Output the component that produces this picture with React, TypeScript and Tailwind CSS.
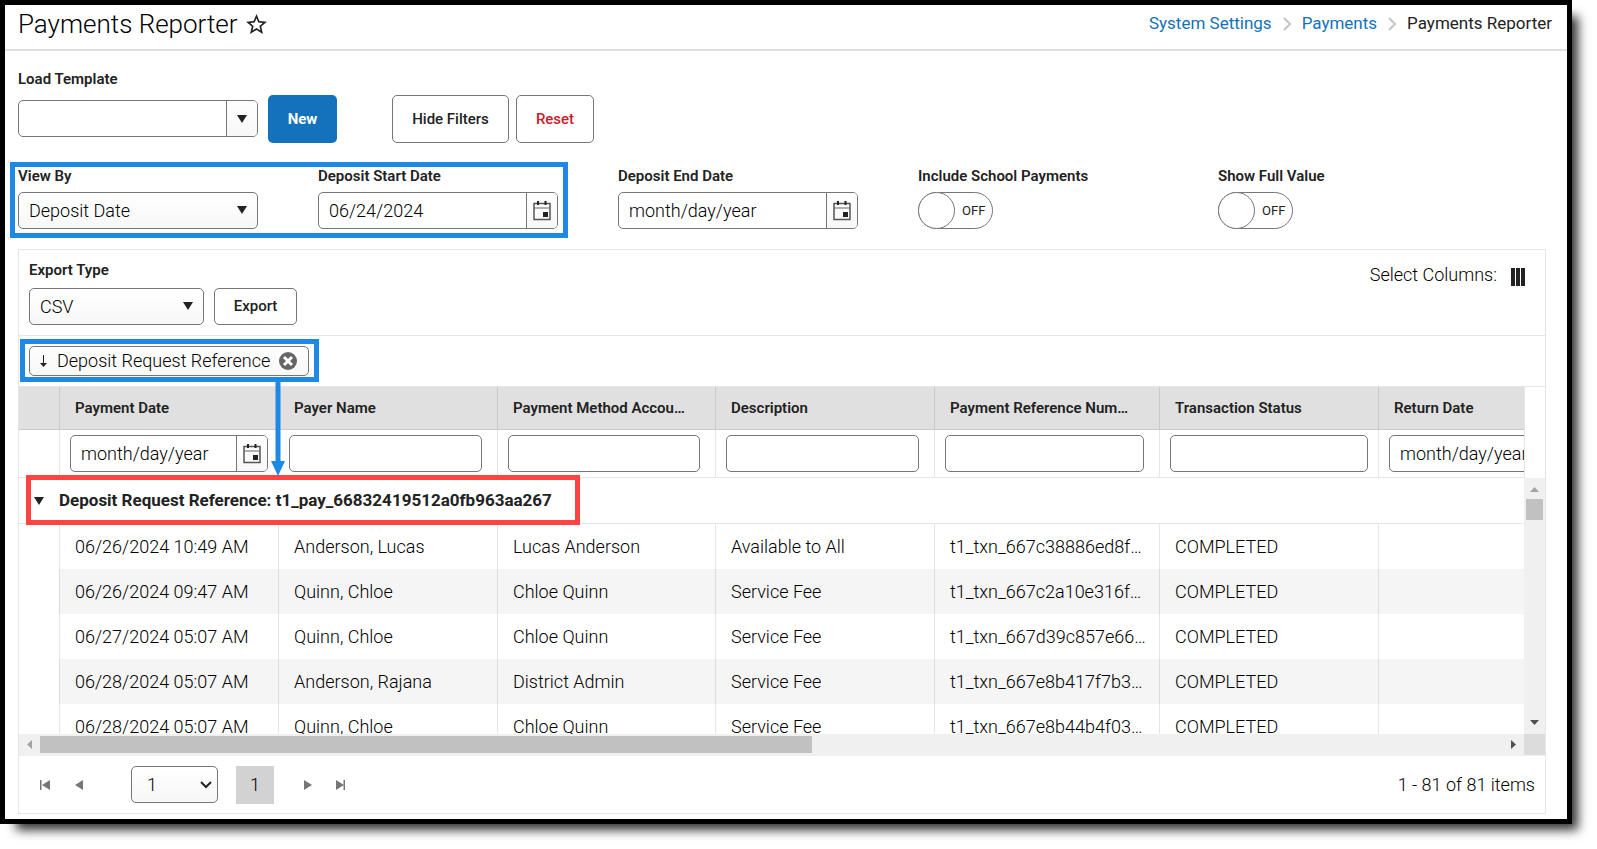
import React from 'react';
import { MdStarBorder } from 'react-icons/md';

interface Payment {
  date: string;
  payer: string;
  account: string;
  description: string;
  reference: string;
  status: string;
}

const payments: Payment[] = [
  { date: '06/26/2024 10:49 AM', payer: 'Anderson, Lucas', account: 'Lucas Anderson', description: 'Available to All', reference: 't1_txn_667c38886ed8f…', status: 'COMPLETED' },
  { date: '06/26/2024 09:47 AM', payer: 'Quinn, Chloe', account: 'Chloe Quinn', description: 'Service Fee', reference: 't1_txn_667c2a10e316f…', status: 'COMPLETED' },
  { date: '06/27/2024 05:07 AM', payer: 'Quinn, Chloe', account: 'Chloe Quinn', description: 'Service Fee', reference: 't1_txn_667d39c857e66…', status: 'COMPLETED' },
  { date: '06/28/2024 05:07 AM', payer: 'Anderson, Rajana', account: 'District Admin', description: 'Service Fee', reference: 't1_txn_667e8b417f7b3…', status: 'COMPLETED' },
  { date: '06/28/2024 05:07 AM', payer: 'Quinn, Chloe', account: 'Chloe Quinn', description: 'Service Fee', reference: 't1_txn_667e8b44b4f03…', status: 'COMPLETED' },
];

const columns = [
  { title: 'Payment Date', date: true, pad: 'pr-[10px]' },
  { title: 'Payer Name', date: false, pad: 'pr-[15px]' },
  { title: 'Payment Method Accou…', date: false, pad: 'pr-[15px]' },
  { title: 'Description', date: false, pad: 'pr-[15px]' },
  { title: 'Payment Reference Num…', date: false, pad: 'pr-[15px]' },
  { title: 'Transaction Status', date: false, pad: 'pr-[10px]' },
  { title: 'Return Date', date: true, pad: 'pr-[10px]' },
];

const labelClass = 'block text-[15px] leading-5 font-semibold';
const boxClass = 'h-[37px] rounded-[5px] border border-[#767676] bg-white';
const buttonClass = 'rounded-[5px] border border-[#767676] bg-white text-[15px] font-medium';

function Caret({ className = '' }: { className?: string }) {
  return (
    <svg width="10" height="8" viewBox="0 0 10 8" className={className} aria-hidden="true">
      <path d="M0 0h10L5 8z" fill="#222" />
    </svg>
  );
}

function CalendarIcon() {
  return (
    <svg width="18" height="20" viewBox="0 0 18 20" fill="none" aria-hidden="true">
      <path d="M1 2.500h16v16h-16z" stroke="#555" strokeWidth="1.500" />
      <path d="M1 7h16" stroke="#666" strokeWidth="1.200" />
      <path d="M5 0v4M12.500 0v4" stroke="#222" strokeWidth="2" />
      <path d="M10 11h5v5h-5z" fill="#222" />
    </svg>
  );
}

function DateBox({ id, value, label }: { id: string; value?: string; label?: string }) {
  return (
    <div className={`${boxClass} flex overflow-hidden`}>
      <input
        id={id}
        aria-label={label}
        defaultValue={value}
        placeholder="month/day/year"
        className="min-w-0 flex-1 pl-[10px] text-[18px] font-light text-black outline-none placeholder:text-black"
      />
      <button
        aria-label="Open calendar"
        className="flex w-[31px] items-center justify-center border-l border-[#767676] bg-linear-to-b from-white to-[#f7f7f7]"
      >
        <CalendarIcon />
      </button>
    </div>
  );
}

function SelectBox({ id, value }: { id: string; value: string }) {
  return (
    <div className="relative">
      <select
        id={id}
        className={`${boxClass} w-full appearance-none bg-linear-to-b from-white to-[#f7f7f7] pl-[10px] text-[18px] font-light text-black`}
      >
        <option>{value}</option>
      </select>
      <Caret className="pointer-events-none absolute top-[14px] right-[11px]" />
    </div>
  );
}

function Toggle({ id, label }: { id: string; label: string }) {
  return (
    <div className="w-[300px]">
      <label htmlFor={id} className={`${labelClass} mb-[6px]`}>{label}</label>
      <div className="relative flex h-[37px] w-[75px] items-center rounded-full border border-[#767676] text-[13px]">
        <input
          id={id}
          type="checkbox"
          role="switch"
          className="-ml-px size-[37px] appearance-none rounded-full border border-[#767676] bg-white"
        />
        <span className="ml-[7px]">OFF</span>
      </div>
    </div>
  );
}

function GridColumns() {
  return (
    <colgroup>
      <col className="w-[40px]" />
      <col className="w-[219px]" />
      <col className="w-[219px]" />
      <col className="w-[218px]" />
      <col className="w-[219px]" />
      <col className="w-[225px]" />
      <col className="w-[219px]" />
      <col className="w-[219px]" />
    </colgroup>
  );
}

function GridHeader() {
  return (
    <div className="mr-[20px] overflow-hidden border-r border-[#e6e6e6]">
      <table className="w-[1578px] table-fixed border-separate border-spacing-0">
        <GridColumns />
        <thead>
          <tr className="h-[43px] bg-[#e0e0e0] text-left text-[15px]">
            <th className="border-b border-[#c9c9c9]" aria-label="Group" />
            {columns.map((col) => (
              <th key={col.title} className="border-b border-l border-[#c9c9c9] pl-[15px] font-semibold whitespace-nowrap">
                {col.title}
              </th>
            ))}
          </tr>
          <tr className="h-[48px]">
            <td className="border-b border-[#e6e6e6]" />
            {columns.map((col, i) => (
              <td key={col.title} className={`border-b border-l border-[#e6e6e6] pl-[10px] ${col.pad}`}>
                {col.date ? (
                  <DateBox id={`filter-${i}`} label={`Filter ${col.title}`} />
                ) : (
                  <input aria-label={`Filter ${col.title}`} className={`${boxClass} block w-full px-[10px] text-[18px]`} />
                )}
              </td>
            ))}
          </tr>
        </thead>
      </table>
    </div>
  );
}

function GridBody() {
  return (
    <div className="h-[256px] min-w-0 flex-1 overflow-hidden">
      <table className="w-[1578px] table-fixed border-separate border-spacing-0 text-[18px] font-light text-black">
        <GridColumns />
        <tbody>
          <tr className="h-[46px]">
            <td colSpan={8} className="border-b border-[#e6e6e6] text-[17px] font-bold text-[#222]">
              <div className="flex items-center pl-[15px]">
                <button aria-label="Collapse group"><Caret /></button>
                <span className="ml-[15px]">Deposit Request Reference: t1_pay_66832419512a0fb963aa267</span>
              </div>
            </td>
          </tr>
          {payments.map((p, i) => (
            <tr key={p.reference} className="h-[45px]">
              <td />
              {[p.date, p.payer, p.account, p.description, p.reference, p.status, ''].map((text, j) => (
                <td
                  key={j}
                  className={`border-l pl-[15px] whitespace-nowrap ${i % 2 ? 'border-[#dcdcdc] bg-[#f5f5f5]' : 'border-[#e6e6e6]'}`}
                >
                  {text}
                </td>
              ))}
            </tr>
          ))}
        </tbody>
      </table>
    </div>
  );
}

function VerticalScroll() {
  return (
    <div className="flex w-[21px] flex-col items-center bg-[#f0f0f0]">
      <svg width="21" height="21" viewBox="0 0 21 21" aria-hidden="true">
        <path d="M6 14h9l-4.500-5z" fill="#a3a3a3" />
      </svg>
      <div className="h-[21px] w-[17px] bg-[#c1c1c1]" />
      <svg width="21" height="21" viewBox="0 0 21 21" className="mt-auto" aria-hidden="true">
        <path d="M6 7h9l-4.500 5z" fill="#505050" />
      </svg>
    </div>
  );
}

function HorizontalScroll() {
  return (
    <div className="flex h-[22px] bg-[#f0f0f0]">
      <svg width="21" height="21" viewBox="0 0 21 21" aria-hidden="true">
        <path d="M13 6v9l-5-4.500z" fill="#a3a3a3" />
      </svg>
      <div className="flex-1 py-[2px]">
        <div className="h-[17px] w-[772px] max-w-full bg-[#c1c1c1]" />
      </div>
      <svg width="21" height="21" viewBox="0 0 21 21" aria-hidden="true">
        <path d="M8 6v9l5-4.500z" fill="#505050" />
      </svg>
      <div className="h-[21px] w-[21px] bg-[#dcdcdc]" />
    </div>
  );
}

function Pager() {
  return (
    <div className="flex h-[57px] items-center pr-[10px] pl-[20px] text-[18px] font-light text-black">
      <button aria-label="First page" className="flex w-[12px]">
        <svg width="12" height="10" viewBox="0 0 12 10"><path d="M1 0h1.500v10h-1.500zM11 0v10l-8-5z" fill="#767676" /></svg>
      </button>
      <button aria-label="Previous page" className="ml-[24px] flex w-[9px]">
        <svg width="9" height="10" viewBox="0 0 9 10"><path d="M8 0v10l-8-5z" fill="#767676" /></svg>
      </button>
      <div className="relative ml-[47px] w-[87px]">
        <select aria-label="Page" className={`${boxClass} block w-full appearance-none bg-linear-to-b from-white to-[#f7f7f7] pl-[15px]`}>
          <option>1</option>
        </select>
        <svg width="12" height="8" viewBox="0 0 12 8" fill="none" className="pointer-events-none absolute top-[15px] right-[6px]" aria-hidden="true">
          <path d="M1 1l5 5 5-5" stroke="#222" strokeWidth="2" />
        </svg>
      </div>
      <button className="ml-[18px] h-[38px] w-[38px] bg-[#d2d2d2]">1</button>
      <button aria-label="Next page" className="ml-[29px] flex w-[9px]">
        <svg width="9" height="10" viewBox="0 0 9 10"><path d="M1 0v10l8-5z" fill="#767676" /></svg>
      </button>
      <button aria-label="Last page" className="ml-[23px] flex w-[12px]">
        <svg width="12" height="10" viewBox="0 0 12 10"><path d="M1 0v10l8-5zM8.500 0h1.500v10h-1.500z" fill="#767676" /></svg>
      </button>
      <span className="ml-auto">1 - 81 of 81 items</span>
    </div>
  );
}

function Separator() {
  return (
    <svg width="10" height="14" viewBox="0 0 10 14" fill="none" aria-hidden="true">
      <path d="M2 1l6 6-6 6" stroke="#c4c4c4" strokeWidth="2" />
    </svg>
  );
}

export default function App() {
  return (
    <div className="bg-white pb-[25px] font-['Roboto',sans-serif] text-[#222]">
      <div className="mr-[25px] border-5 border-black bg-white shadow-[11px_11px_10px_-5px_rgba(0,0,0,0.8)]">
        <header className="flex h-[46px] items-center justify-between border-b-2 border-[#e0e0e0] pr-[15px] pb-[6px] pl-[13px]">
          <div className="flex items-center gap-[6px]">
            <h1 className="text-[26px] leading-8 font-light text-black">Payments Reporter</h1>
            <button aria-label="Add to favorites"><MdStarBorder size={25} /></button>
          </div>
          <nav className="flex items-center gap-[10px] text-[17px]">
            <a href="#settings" className="text-[#1471bb]">System Settings</a>
            <Separator />
            <a href="#payments" className="text-[#1471bb]">Payments</a>
            <Separator />
            <span>Payments Reporter</span>
          </nav>
        </header>

        <main className="px-[13px] pt-[18px] pb-[5px]">
          <label htmlFor="template" className={labelClass}>Load Template</label>
          <div className="mt-[6px] flex items-start">
            <div className={`${boxClass} mt-[5px] flex w-[240px] overflow-hidden`}>
              <input id="template" className="min-w-0 flex-1 px-[10px] text-[18px] outline-none" />
              <button aria-label="Show templates" className="flex w-[31px] items-center justify-center border-l border-[#767676] bg-linear-to-b from-white to-[#f7f7f7]">
                <Caret />
              </button>
            </div>
            <button className="ml-[10px] h-12 w-[69px] rounded-[5px] bg-[#1471bb] text-[15px] font-bold text-white">New</button>
            <button className={`${buttonClass} ml-[55px] h-12 w-[117px]`}>Hide Filters</button>
            <button className={`${buttonClass} ml-[7px] h-12 w-[78px] text-[#c8202b]`}>Reset</button>
          </div>

          <div className="mt-[23px] flex flex-wrap">
            <div className="relative flex">
              <div className="w-[300px] pr-[60px]">
                <label htmlFor="view-by" className={`${labelClass} mb-[6px]`}>View By</label>
                <SelectBox id="view-by" value="Deposit Date" />
              </div>
              <div className="w-[300px] pr-[60px]">
                <label htmlFor="start-date" className={`${labelClass} mb-[6px]`}>Deposit Start Date</label>
                <DateBox id="start-date" value="06/24/2024" />
              </div>
              {/* Blue callout around the two filters */}
              <div className="pointer-events-none absolute -top-1 right-[50px] -bottom-[9px] -left-2 border-5 border-[#1e88e5]" />
            </div>
            <div className="w-[300px] pr-[60px]">
              <label htmlFor="end-date" className={`${labelClass} mb-[6px]`}>Deposit End Date</label>
              <DateBox id="end-date" />
            </div>
            <Toggle id="school-payments" label="Include School Payments" />
            <Toggle id="full-value" label="Show Full Value" />
          </div>

          <section className="mt-5 mr-[8px] border border-[#e6e6e6]">
            <div className="flex justify-between border-b border-[#e6e6e6] p-[10px]">
              <div>
                <label htmlFor="export-type" className={`${labelClass} mb-2`}>Export Type</label>
                <div className="flex gap-[10px]">
                  <div className="w-[175px]"><SelectBox id="export-type" value="CSV" /></div>
                  <button className={`${buttonClass} h-[37px] w-[83px]`}>Export</button>
                </div>
              </div>
              <div className="mr-[10px] flex h-[28px] items-center gap-[14px] text-[18px] font-light text-black">
                <span>Select Columns:</span>
                <button aria-label="Select columns" className="pt-[6px]">
                  <svg width="14" height="18" viewBox="0 0 14 18" className="block"><path d="M0 0h4v18h-4zM5 0h4v18h-4zM10 0h4v18h-4z" fill="#222" /></svg>
                </button>
              </div>
            </div>

            <div className="flex border-b border-[#e6e6e6] p-[10px]">
              <div className="relative z-10 flex h-[30px] w-[280px] items-center rounded-[5px] border border-[#767676] bg-linear-to-b from-white to-[#f7f7f7] pl-[10px] text-[18px] font-light text-black">
                <svg width="7" height="12" viewBox="0 0 7 12" aria-hidden="true"><path d="M3 0h1v8h3l-3.500 4-3.500-4h3z" fill="#222" /></svg>
                <span className="ml-[10px] pb-[2px]">Deposit Request Reference</span>
                <button aria-label="Remove grouping" className="mr-[11px] ml-auto">
                  <svg width="18" height="18" viewBox="0 0 18 18" className="block">
                    <circle cx="9" cy="9" r="9" fill="#666" />
                    <path d="M5 5l8 8M13 5l-8 8" stroke="#fff" strokeWidth="3" />
                  </svg>
                </button>
                <div className="pointer-events-none absolute -top-2 -right-[11px] -bottom-[7px] -left-[10px] border-5 border-[#1e88e5]" />
                {/* Arrow from the grouping chip down to the group row */}
                <svg width="14" height="94" viewBox="0 0 14 94" className="pointer-events-none absolute top-[35px] left-[241px]" aria-hidden="true">
                  <path d="M4.500 0h5v79h4.500l-7 15-7-15h4.500z" fill="#1e88e5" />
                </svg>
              </div>
            </div>

            <GridHeader />
            <div className="relative flex">
              <GridBody />
              <VerticalScroll />
              {/* Red callout around the group row */}
              <div className="pointer-events-none absolute -top-[3px] left-[7px] h-[50px] w-[554px] border-5 border-[#ff4242]" />
            </div>
            <HorizontalScroll />
            <Pager />
          </section>
        </main>
      </div>
    </div>
  );
}
